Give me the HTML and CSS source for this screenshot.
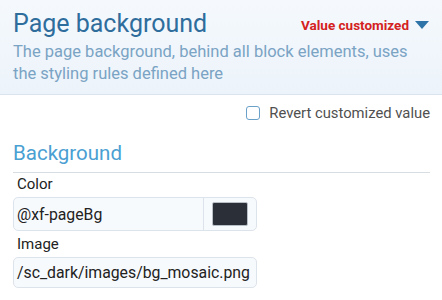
FILE: index.html
```html
<!DOCTYPE html>
<html lang="en">
<head>
  <meta charset="UTF-8" />
  <title>Page background</title>
  <link rel="stylesheet" href="styles.css">
</head>
<body>
  <div class="head">
    <div class="head-row">
      <h1>Page background</h1>
      <span class="custom">Value customized <span class="caret"></span></span>
    </div>
    <p class="desc">The page background, behind all block elements, uses the styling rules defined here</p>
  </div>

  <div class="revert">
    <label><span class="box"></span>Revert customized value</label>
  </div>

  <div class="section">
    <h2>Background</h2>
    <div class="field-label">Color</div>
    <div class="input color-input">
      <span class="val">@xf-pageBg</span>
      <span class="swatch-wrap"><span class="swatch"></span></span>
    </div>
    <div class="field-label">Image</div>
    <div class="input">
      <span class="val">/sc_dark/images/bg_mosaic.png</span>
    </div>
  </div>
</body>
</html>
```

FILE: styles.css
```css
* { box-sizing: border-box; }
body {
  margin: 0;
  font-family: Roboto, "Liberation Sans", sans-serif;
  background: #fff;
  color: #222;
}
.head {
  background: linear-gradient(to bottom, #f5f9fd, #ecf3fa);
  border-bottom: 1px solid #dbe4ec;
  padding: 7px 12px 10px 13px;
  height: 95px;
}
.head-row {
  display: flex;
  justify-content: space-between;
  align-items: center;
}
h1 {
  margin: 0;
  font-size: 25px;
  font-weight: 400;
  color: #2e6d9c;
  line-height: 34px;
}
.custom {
  color: #d42121;
  font-weight: 700;
  font-size: 13.5px;
  display: flex;
  align-items: center;
  gap: 6px;
  margin-top: 2px;
  margin-right: 1px;
}
.caret {
  width: 0;
  height: 0;
  border-left: 7px solid transparent;
  border-right: 7px solid transparent;
  border-top: 8px solid #2e74a8;
}
.desc {
  margin: 0;
  font-size: 16.5px;
  line-height: 22px;
  color: #7aa3c4;
}
.revert {
  display: flex;
  justify-content: flex-end;
  padding: 9px 12px 0;
}
.revert label {
  display: flex;
  align-items: center;
  gap: 9px;
  color: #505050;
  font-size: 14.8px;
}
.box {
  width: 14px;
  height: 14px;
  border: 1.5px solid #6aa1c9;
  border-radius: 3px;
}
.section {
  padding: 19px 12px 0 13px;
}
h2 {
  margin: 0;
  font-size: 20.5px;
  font-weight: 400;
  color: #4aa0d2;
  line-height: 24px;
  padding-bottom: 7px;
  border-bottom: 1px solid #d8dde2;
}
.field-label {
  font-size: 15px;
  padding: 1px 0 0 4px;
  line-height: 20px;
  color: #222;
}
.input {
  width: 244px;
  margin: 3px 0 2px;
  border: 1px solid #dde3ea;
  border-radius: 5px;
  background: #f7fafd;
  display: flex;
  align-items: stretch;
  font-size: 15.8px;
  color: #222;
}
.input .val {
  flex: 1;
  padding: 5px 3px;
  line-height: 19px;
}
.color-input { height: 34px; }
.color-input .val { padding-top: 7px; }
.swatch-wrap {
  width: 53px;
  border-left: 1px solid #dde3ea;
  display: flex;
  align-items: center;
  justify-content: center;
}
.swatch {
  width: 36px;
  height: 24px;
  background: #2b2f37;
  border: 1px solid #b9bfc6;
  border-radius: 2px;
}
```
